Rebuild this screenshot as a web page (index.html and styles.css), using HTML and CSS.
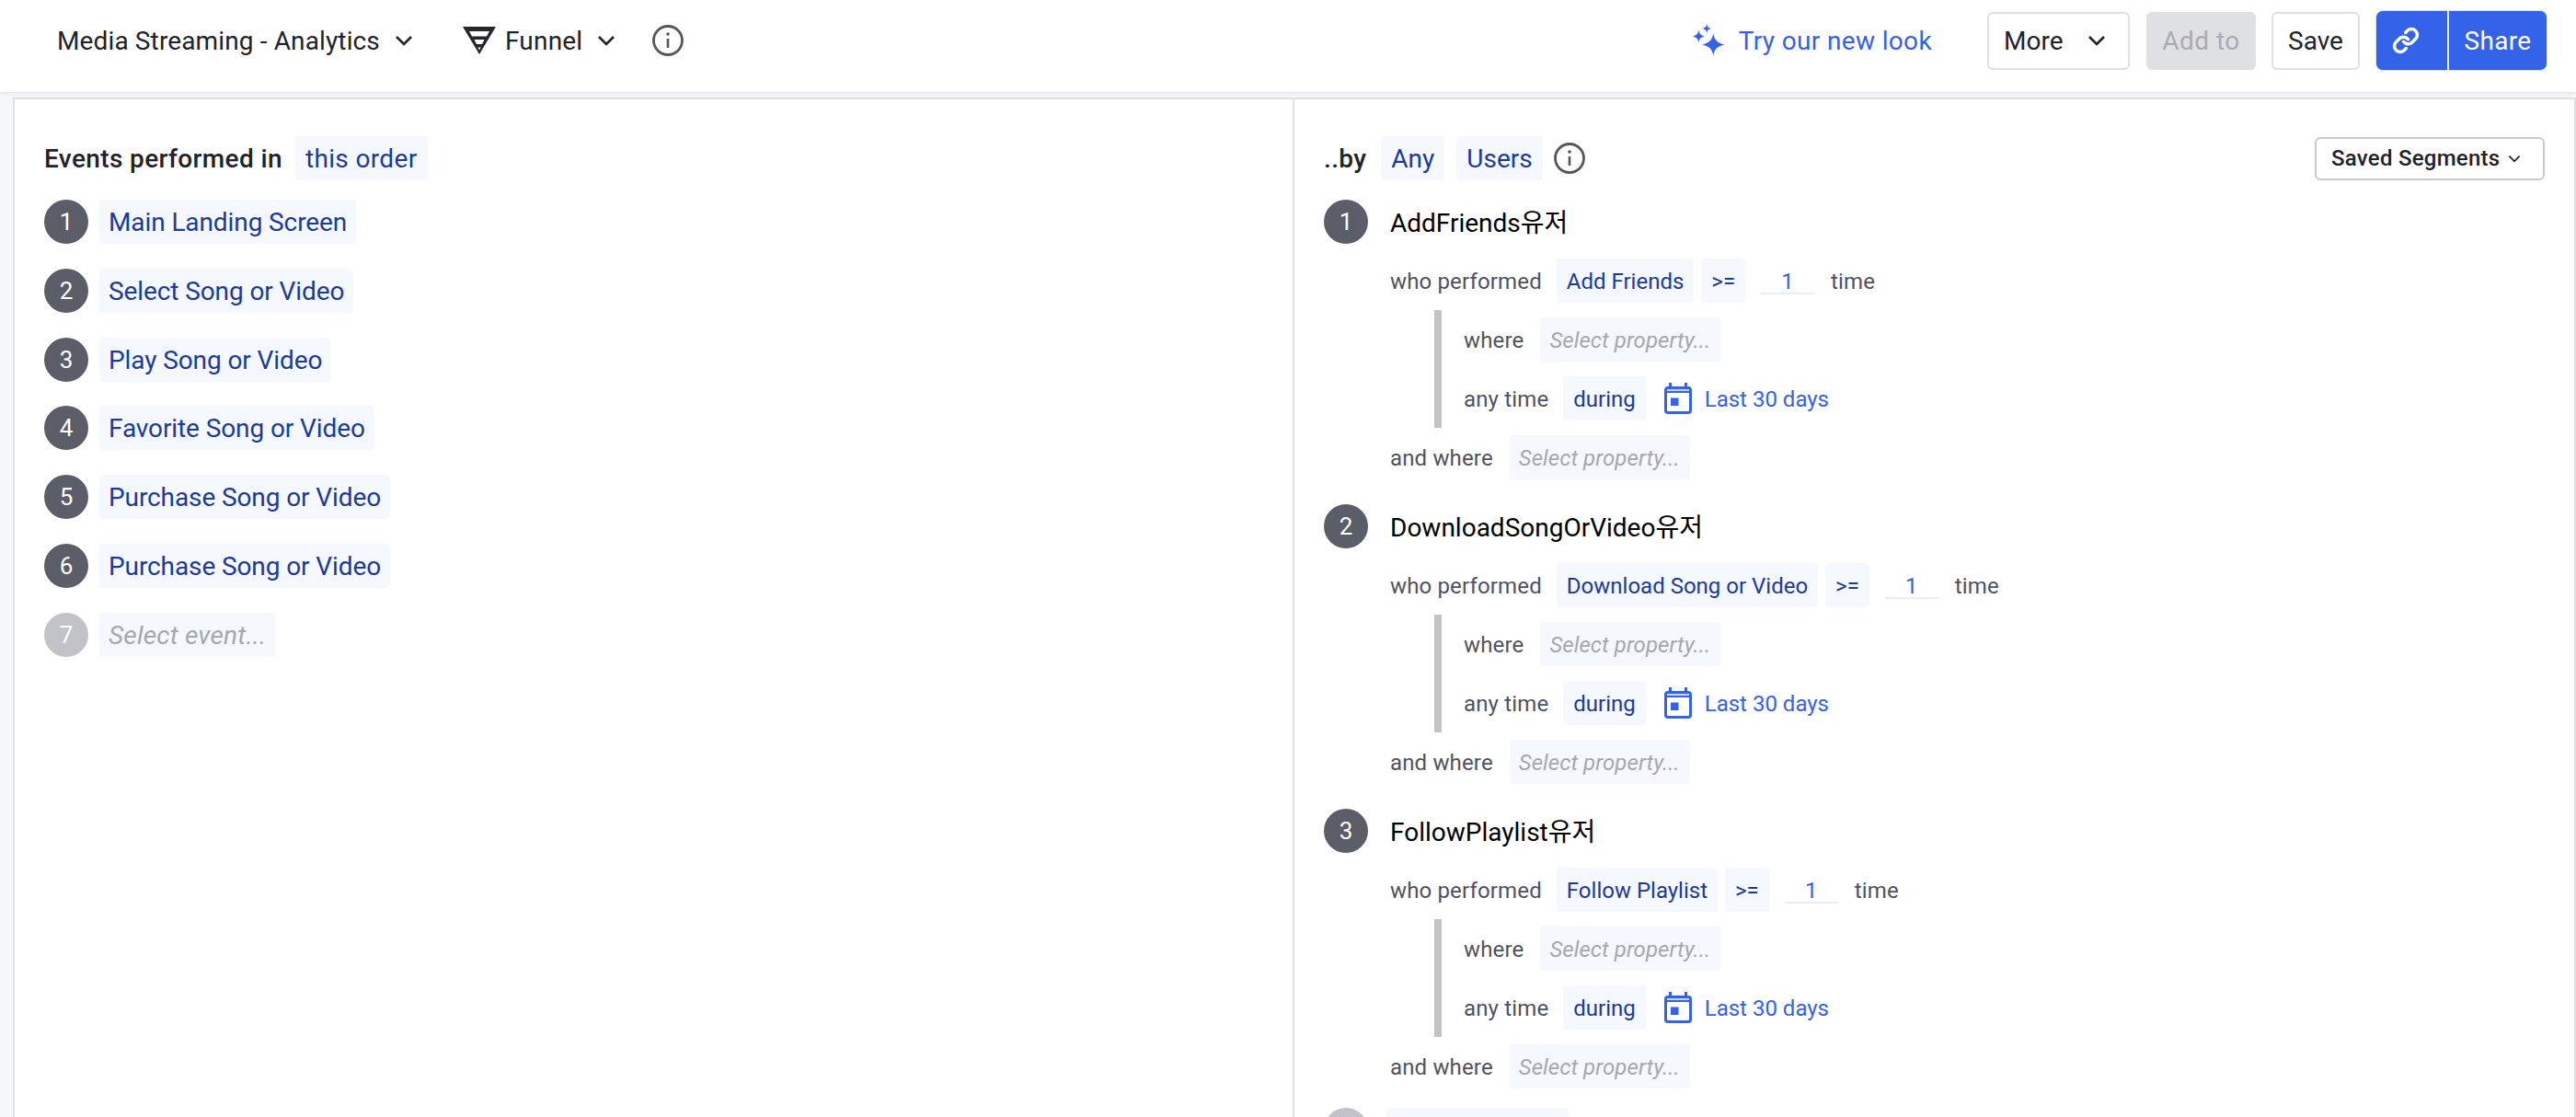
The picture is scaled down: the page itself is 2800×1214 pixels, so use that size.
FILE: index.html
```html
<!DOCTYPE html>
<html lang="en">
<head>
<meta charset="utf-8">
<title>Media Streaming - Analytics</title>
<link rel="stylesheet" href="styles.css">
</head>
<body>
<header class="topbar">
  <div class="tb-left">
    <div class="tb-item tb-project">Media Streaming - Analytics <svg class="chev" viewBox="0 0 20 12"><path d="M2 2l8 8 8-8"/></svg></div>
    <div class="tb-item tb-type">
      <svg class="funnel" viewBox="0 0 36 30"><path d="M0 0h36L18 30z" fill="#26272e"/><path d="M7 5h22l-3 5.500H10zM12.500 14h11l-2.500 5h-6zM16.500 22.500h3L18 25.500z" fill="#fff"/></svg>
      Funnel <svg class="chev" viewBox="0 0 20 12"><path d="M2 2l8 8 8-8"/></svg>
    </div>
    <svg class="info tb-info" viewBox="0 0 34 34"><circle cx="17" cy="17" r="15.500"/><path d="M17 15v10" stroke-width="2.600"/><circle class="dot" cx="17" cy="10" r="1.800"/></svg>
  </div>
  <div class="tb-right">
    <div class="try">
      <svg class="spark" viewBox="0 0 34 34"><path d="M22 9.500c1 7 4 10 11.500 11.800C26 23 23 26 22 33c-1-7-4-10-11.500-11.700C18 19.500 21 16.500 22 9.500z"/><path d="M15.300 0c.5 3 1.500 4 4.700 4.700-3.200 .7-4.200 1.700-4.700 5-.5-3.300-1.500-4.300-4.700-5 3.200-.7 4.200-1.700 4.700-4.700z"/><path d="M7 6.200c.6 4 2 5.500 6 6.500-4 1-5.400 2.500-6 6.500-.6-4-2-5.500-6-6.500 4-1 5.400-2.500 6-6.500z"/></svg>
      Try our new look
    </div>
    <button class="btn btn-more">More <svg class="chev" viewBox="0 0 20 12"><path d="M2 2l8 8 8-8"/></svg></button>
    <button class="btn btn-disabled">Add to</button>
    <button class="btn btn-save">Save</button>
    <div class="share">
      <span class="share-link"><svg viewBox="0 0 24 24"><path d="M10 13a5 5 0 0 0 7.540.54l3-3a5 5 0 0 0-7.070-7.070l-1.720 1.710"/><path d="M14 11a5 5 0 0 0-7.540-.54l-3 3a5 5 0 0 0 7.070 7.070l1.710-1.710"/></svg></span>
      <span class="share-text">Share</span>
    </div>
  </div>
</header>

<main class="stage">
  <div class="panel">
    <section class="col col-left">
      <div class="head">
        <span class="head-label head-label-tight">Events performed in</span>
        <span class="pill pill-head">this order</span>
      </div>
      <ol class="events">
        <li class="event"><span class="num">1</span><span class="pill pill-lg">Main Landing Screen</span></li>
        <li class="event"><span class="num">2</span><span class="pill pill-lg">Select Song or Video</span></li>
        <li class="event"><span class="num">3</span><span class="pill pill-lg">Play Song or Video</span></li>
        <li class="event"><span class="num">4</span><span class="pill pill-lg">Favorite Song or Video</span></li>
        <li class="event"><span class="num">5</span><span class="pill pill-lg">Purchase Song or Video</span></li>
        <li class="event"><span class="num">6</span><span class="pill pill-lg">Purchase Song or Video</span></li>
        <li class="event event-last"><span class="num num-off">7</span><span class="pill pill-lg pill-ph">Select event...</span></li>
      </ol>
    </section>

    <section class="col col-right">
      <div class="head head-right">
        <span class="head-label by">..by</span>
        <span class="pill pill-any">Any</span>
        <span class="pill pill-users">Users</span>
        <svg class="info head-info" viewBox="0 0 34 34"><circle cx="17" cy="17" r="15.500"/><path d="M17 15v10" stroke-width="2.600"/><circle class="dot" cx="17" cy="10" r="1.800"/></svg>
        <button class="btn-saved">Saved Segments <svg class="chev chev-sm" viewBox="0 0 20 12"><path d="M2 2l8 8 8-8"/></svg></button>
      </div>

      <div class="seg">
        <div class="seg-title"><span class="num">1</span><span class="seg-name">AddFriends유저</span></div>
        <div class="seg-body">
          <div class="line"><span class="lbl">who performed</span><span class="pill pill-sm">Add Friends</span><span class="pill pill-sm pill-op">&gt;=</span><span class="count">1</span><span class="lbl">time</span></div>
          <div class="filter">
            <div class="line"><span class="lbl lbl-where">where</span><span class="pill pill-sm pill-ph">Select property...</span></div>
            <div class="line"><span class="lbl">any time</span><span class="pill pill-sm">during</span><span class="range"><svg class="cal" viewBox="0 0 30 34"><path d="M5 0h3v4h14V0h3v4h1a4 4 0 0 1 4 4v22a4 4 0 0 1-4 4H4a4 4 0 0 1-4-4V8a4 4 0 0 1 4-4h1zM3 11v19a1 1 0 0 0 1 1h22a1 1 0 0 0 1-1V11zM7 16.500h8.500V25H7z" fill-rule="evenodd"/><path class="cal-band" d="M3 7h24v2H3z"/></svg>Last 30 days</span></div>
          </div>
          <div class="line"><span class="lbl lbl-where">and where</span><span class="pill pill-sm pill-ph">Select property...</span></div>
        </div>
      </div>

      <div class="seg">
        <div class="seg-title"><span class="num">2</span><span class="seg-name">DownloadSongOrVideo유저</span></div>
        <div class="seg-body">
          <div class="line"><span class="lbl">who performed</span><span class="pill pill-sm">Download Song or Video</span><span class="pill pill-sm pill-op">&gt;=</span><span class="count">1</span><span class="lbl">time</span></div>
          <div class="filter">
            <div class="line"><span class="lbl lbl-where">where</span><span class="pill pill-sm pill-ph">Select property...</span></div>
            <div class="line"><span class="lbl">any time</span><span class="pill pill-sm">during</span><span class="range"><svg class="cal" viewBox="0 0 30 34"><path d="M5 0h3v4h14V0h3v4h1a4 4 0 0 1 4 4v22a4 4 0 0 1-4 4H4a4 4 0 0 1-4-4V8a4 4 0 0 1 4-4h1zM3 11v19a1 1 0 0 0 1 1h22a1 1 0 0 0 1-1V11zM7 16.500h8.500V25H7z" fill-rule="evenodd"/><path class="cal-band" d="M3 7h24v2H3z"/></svg>Last 30 days</span></div>
          </div>
          <div class="line"><span class="lbl lbl-where">and where</span><span class="pill pill-sm pill-ph">Select property...</span></div>
        </div>
      </div>

      <div class="seg">
        <div class="seg-title"><span class="num">3</span><span class="seg-name">FollowPlaylist유저</span></div>
        <div class="seg-body">
          <div class="line"><span class="lbl">who performed</span><span class="pill pill-sm">Follow Playlist</span><span class="pill pill-sm pill-op">&gt;=</span><span class="count">1</span><span class="lbl">time</span></div>
          <div class="filter">
            <div class="line"><span class="lbl lbl-where">where</span><span class="pill pill-sm pill-ph">Select property...</span></div>
            <div class="line"><span class="lbl">any time</span><span class="pill pill-sm">during</span><span class="range"><svg class="cal" viewBox="0 0 30 34"><path d="M5 0h3v4h14V0h3v4h1a4 4 0 0 1 4 4v22a4 4 0 0 1-4 4H4a4 4 0 0 1-4-4V8a4 4 0 0 1 4-4h1zM3 11v19a1 1 0 0 0 1 1h22a1 1 0 0 0 1-1V11zM7 16.500h8.500V25H7z" fill-rule="evenodd"/><path class="cal-band" d="M3 7h24v2H3z"/></svg>Last 30 days</span></div>
          </div>
          <div class="line"><span class="lbl lbl-where">and where</span><span class="pill pill-sm pill-ph">Select property...</span></div>
        </div>
      </div>

      <div class="seg-add"><span class="num num-off"></span><span class="pill pill-lg pill-add"></span></div>
    </section>
  </div>
</main>
</body>
</html>
```

FILE: styles.css
```css
* { box-sizing: border-box; }
html, body { margin: 0; height: 100%; overflow: hidden; }
body {
  background: #f5f6f8;
  color: #21222a;
  font-family: Roboto, "Noto Sans CJK KR", sans-serif;
  font-size: 28px;
  display: flex;
  flex-direction: column;
}
button { font: inherit; color: inherit; }

.topbar {
  height: 100px;
  flex: none;
  background: #fff;
  display: flex;
  align-items: flex-start;
  justify-content: space-between;
  padding-left: 62px;
  padding-right: 31px;
  box-shadow: 0 1px 3px rgba(30, 32, 45, .1);
  position: relative;
}
.tb-left { display: flex; align-items: center; height: 88px; letter-spacing: .13px; }
.tb-item { display: flex; align-items: center; white-space: nowrap; }
.tb-project { gap: 16px; }
.tb-type { margin-left: 54px; gap: 10px; letter-spacing: .2px; }
.tb-type .chev { margin-left: 6px; }
.tb-info { margin-left: 40px; }
.chev { width: 20px; height: 12px; fill: none; stroke: #21222a; stroke-width: 2.600; flex: none; }
.chev-sm { width: 14px; height: 9px; }
.funnel { width: 36px; height: 30px; flex: none; }
.info { width: 34px; height: 34px; flex: none; fill: none; stroke: #54565f; stroke-width: 2.800; }
.info .dot { fill: #54565f; stroke: none; }

.tb-right { display: flex; align-items: center; height: 88px; }
.try { display: flex; align-items: center; gap: 15px; color: #3462e8; margin-right: 60px; white-space: nowrap; letter-spacing: .35px; }
.spark { width: 36px; height: 36px; fill: #3462e8; flex: none; }
.btn {
  height: 63px;
  border: 2px solid #dfe0e4;
  border-radius: 6px;
  background: #fff;
  padding: 0;
  display: flex;
  align-items: center;
  justify-content: center;
  margin-right: 17px;
}
.btn-more { width: 155px; gap: 26px; justify-content: flex-start; padding-left: 16px; margin-right: 18px; }
.btn-disabled { width: 119px; background: #dfe0e4; color: #a9abb3; letter-spacing: .5px; }
.btn-save { width: 96px; }
.share {
  width: 187px;
  height: 66px;
  display: flex;
  background: #3462e8;
  border: 1px solid #dfe0e4;
  border-radius: 8px;
  color: #fff;
  overflow: hidden;
}
.share-link { width: 79px; display: flex; align-items: center; justify-content: center; padding-right: 14px; border-right: 2px solid #e4e8f8; }
.share-link svg { width: 30px; height: 30px; fill: none; stroke: #fff; stroke-width: 2.800; stroke-linecap: round; stroke-linejoin: round; flex: none; }
.share-text { flex: 1; display: flex; align-items: center; justify-content: center; letter-spacing: .3px; }

.stage { flex: 1; min-height: 0; padding: 6px 0 0 14px; }
.panel {
  height: 100%;
  background: #fff;
  border-top: 2px solid #dfe0e4;
  border-left: 2px solid #dfe0e4;
  border-right: 2px solid #dfe0e4;
  display: flex;
  overflow: hidden;
}
.col { padding: 40px 32px 0; }
.col-left { width: 1389px; flex: none; }
.col-right { flex: 1; border-left: 2px solid #dfe0e4; min-width: 0; }

.head { display: flex; align-items: center; height: 48px; margin-bottom: 21px; }
.head-label { font-weight: 500; margin-right: 17px; white-space: nowrap; letter-spacing: .37px; }
.head-label-tight { margin-right: 14px; }
.by { margin-right: 16px; }

.pill {
  display: inline-flex;
  align-items: center;
  height: 48px;
  padding: 0 11px;
  background: #f5f8fe;
  border-radius: 4px;
  color: #1c3a9a;
  white-space: nowrap;
  flex: none;
}
.pill-head { letter-spacing: .35px; }
.pill-lg { padding: 1px 10px 0; letter-spacing: -.1px; }
.pill-lg.pill-ph { letter-spacing: .2px; }
.pill-ph { color: #a5a7b0; font-style: italic; }
.pill-any { margin-right: 13px; }
.pill-users { margin-right: 12px; }
.head-info { margin-right: auto; }
.btn-saved {
  height: 47px;
  width: 250px;
  padding: 0 0 0 16px;
  background: #fff;
  border: 2px solid #c9cad0;
  border-radius: 6px;
  font-size: 24px;
  font-weight: 500;
  letter-spacing: .25px;
  display: flex;
  align-items: center;
  justify-content: flex-start;
  gap: 9px;
}

.events { list-style: none; margin: 0; padding: 0; }
.event { display: flex; gap: 12px; margin-bottom: 26.800px; }
.num {
  width: 48px;
  height: 48px;
  flex: none;
  border-radius: 50%;
  background: #5b5d68;
  color: #fff;
  display: flex;
  align-items: center;
  justify-content: center;
  font-size: 26px;
}
.num-off { background: #c2c3c9; }

.seg { margin-bottom: 27px; }
.seg-title { display: flex; align-items: center; gap: 24px; margin-bottom: 16px; }
.seg-name { color: #000; white-space: nowrap; padding-bottom: 2px; }
.seg-body { margin-left: 72px; display: flex; flex-direction: column; }
.line { display: flex; align-items: center; height: 48px; font-size: 24px; }
.lbl { color: #4f5260; margin-right: 16px; white-space: nowrap; padding-top: 2px; letter-spacing: .15px; }
.lbl-where { margin-right: 18px; }
.pill-sm { font-size: 24px; margin-right: 8px; padding: 2px 11px 0; }
.pill-sm.pill-ph { padding: 2px 11px 0 10px; letter-spacing: .07px; }
.pill-op { margin-right: 17px; }
.count {
  width: 58px;
  height: 39px;
  margin-right: 18px;
  border-bottom: 2px solid #e7edfb;
  color: #3462e8;
  text-align: center;
  line-height: 50px;
  align-self: flex-start;
}
.filter {
  margin: 8px 0 8px 48px;
  padding: 8px 0 8px 24px;
  border-left: 8px solid #c2c3c9;
  display: flex;
  flex-direction: column;
  gap: 16px;
}
.range { display: inline-flex; align-items: center; gap: 14px; color: #3462e8; margin-left: 12px; white-space: nowrap; padding-top: 2px; }
.cal { width: 30px; height: 34px; fill: #3462e8; flex: none; margin-top: -2px; }
.cal-band { fill: #c7d4f8; }
.seg-add { display: flex; gap: 20px; margin-top: -6px; }
.pill-add { width: 198px; }
```
